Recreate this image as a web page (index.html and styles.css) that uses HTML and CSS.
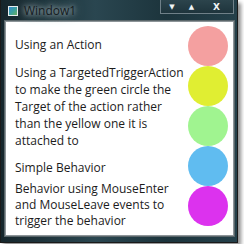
FILE: index.html
```html
<!DOCTYPE html>
<html lang="en">
  <head>
    <meta charset="UTF-8" />
    <title>Window1</title>
    <link rel="stylesheet" href="styles.css">
  </head>
  <body>
    <div class="window">
      <div class="titlebar">
        <span class="app-icon"></span>
        <span class="title">Window1</span>
        <div class="caption-buttons">
          <span class="cap min">&#9660;</span>
          <span class="cap max">&#9650;</span>
          <span class="cap close">X</span>
        </div>
      </div>
      <div class="client">
        <div class="labels">
          <p class="label first">Using an Action</p>
          <p class="label second">Using a TargetedTriggerAction to make the green circle the Target of the action rather than the yellow one it is attached to</p>
          <p class="label third">Simple Behavior</p>
          <p class="label fourth">Behavior using MouseEnter and MouseLeave events to trigger the behavior</p>
        </div>
        <div class="circles">
          <div class="circle pink"></div>
          <div class="circle yellow"></div>
          <div class="circle green"></div>
          <div class="circle blue"></div>
          <div class="circle magenta"></div>
        </div>
      </div>
    </div>
  </body>
</html>
```

FILE: styles.css
```css
body {
  margin: 0;
  width: 244px;
  height: 244px;
  background: #ffffff;
  font-family: "Open Sans", "Noto Sans", sans-serif;
}

.window {
  width: 229px;
  height: 236px;
  display: flex;
  flex-direction: column;
  padding: 0 3px 6px 4px;
  box-sizing: content-box;
  background: linear-gradient(to right, #16262c 0%, #2a4650 40%, #1c343c 70%, #24404a 100%);
  border: 1px solid #1a1a1a;
  border-top: none;
  box-shadow: 3px 3px 4px rgba(0, 0, 0, 0.45);
}

.titlebar {
  height: 21px;
  display: flex;
  align-items: center;
  position: relative;
}

.app-icon {
  width: 8px;
  height: 8px;
  margin: 0 6px 0 3px;
  border: 1px solid #e8eef0;
  background: linear-gradient(135deg, #3a8ad0 0%, #3aa0a0 50%, #6ab060 100%);
}

.title {
  font-size: 12px;
  color: #141a1e;
  text-shadow: 0 0 4px #9aacb2, 0 0 8px #8a9ca2, 0 0 12px #7a8c92;
}

.caption-buttons {
  position: absolute;
  top: 0;
  right: 0;
  width: 72px;
  height: 13px;
  display: flex;
  align-items: center;
  border: 1px solid #6f8088;
  border-top: none;
  background: linear-gradient(to bottom, #2c444c, #1e343c);
  color: #f0f4f5;
  font-family: "DejaVu Sans", sans-serif;
  font-size: 7px;
  font-weight: bold;
}

.cap {
  text-align: center;
}

.min {
  width: 22px;
}

.max {
  width: 17px;
}

.close {
  flex: 1;
  font-size: 9px;
}

.client {
  flex: 1;
  display: flex;
  background: #ffffff;
  border: 1px solid #8c9498;
  box-shadow: 0 0 0 1px #5a666a;
}

.labels {
  flex: 1;
  padding: 14px 0 0 9px;
}

.label {
  margin: 0;
  font-size: 12px;
  line-height: 17px;
  color: #1c1c1c;
}

.second {
  margin-top: 11px;
}

.third {
  margin-top: 10px;
}

.fourth {
  margin-top: 5px;
  line-height: 16px;
}

.circles {
  padding: 4px 5px 0 0;
}

.circle {
  width: 40px;
  height: 40px;
  border-radius: 50%;
}

.pink {
  background: #f4a0a0;
}

.yellow {
  background: #e0ee32;
}

.green {
  background: #a0f490;
}

.blue {
  background: #60bcf0;
}

.magenta {
  background: #dc32ee;
}
```
